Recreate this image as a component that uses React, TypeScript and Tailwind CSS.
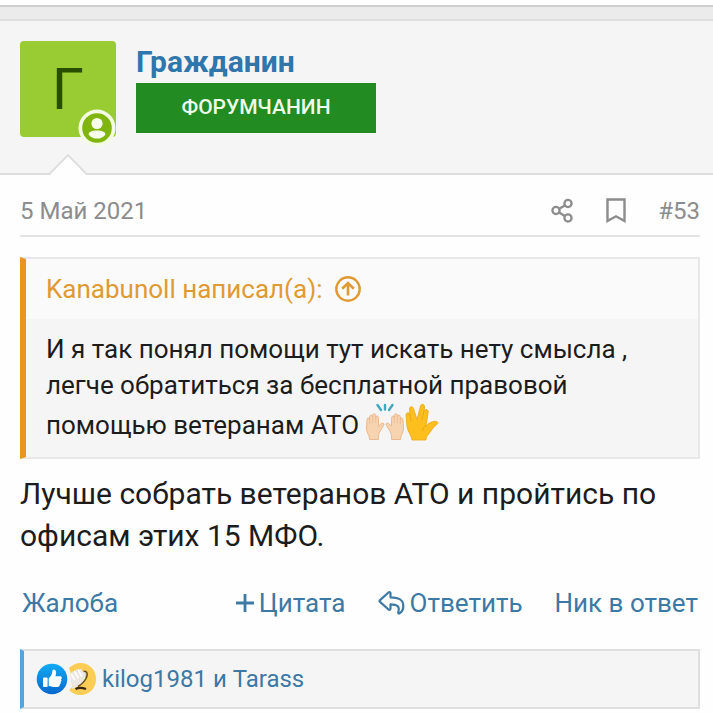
import React from 'react';

type IconProps = { className?: string };

const UserBadge: React.FC<IconProps> = ({ className }) => (
  <svg viewBox="0 0 38 38" className={className} aria-hidden="true">
    <circle cx="19" cy="19" r="18.5" fill="#f3fbe4" />
    <circle cx="19" cy="19" r="14.8" fill="#7fb50c" />
    <circle cx="19" cy="14.5" r="5.6" fill="#f6fdec" />
    <path d="M10.6 25.4c0-3 3.8-4 8.4-4s8.4 1 8.4 4c-1.6 2.6-4.8 4.2-8.4 4.2s-6.8-1.6-8.4-4.2z" fill="#f6fdec" />
  </svg>
);

const ShareIcon: React.FC<IconProps> = ({ className }) => (
  <svg viewBox="0 0 24 26" className={className} fill="none" stroke="currentColor" strokeWidth="2.3" aria-hidden="true">
    <circle cx="6" cy="12.5" r="3.6" />
    <circle cx="18" cy="5.5" r="3.6" />
    <circle cx="18" cy="20" r="3.6" />
    <path d="M9.2 10.7l5.6-3.3M9.2 14.500l5.6 3.500" />
  </svg>
);

const BookmarkIcon: React.FC<IconProps> = ({ className }) => (
  <svg viewBox="0 0 20 26" className={className} fill="none" stroke="currentColor" strokeWidth="2.4" aria-hidden="true">
    <path d="M1.5 1.500h17v21.5L10 18.300 1.5 23z" />
  </svg>
);

const ArrowUpIcon: React.FC<IconProps> = ({ className }) => (
  <svg viewBox="0 0 26 26" className={className} fill="none" stroke="currentColor" strokeWidth="2.4" aria-hidden="true">
    <circle cx="13" cy="13" r="11.7" />
    <path d="M13 19.5V7.5M7.2 12.7L13 7l5.8 5.7" strokeWidth="2.6" />
  </svg>
);

const PlusIcon: React.FC<IconProps> = ({ className }) => (
  <svg viewBox="0 0 20 20" className={className} fill="none" stroke="currentColor" strokeWidth="2.8" aria-hidden="true">
    <path d="M10 1v18M1 10h18" />
  </svg>
);

const ReplyIcon: React.FC<IconProps> = ({ className }) => (
  <svg viewBox="0 0 28 26" className={className} fill="none" stroke="currentColor" strokeWidth="2.2" strokeLinejoin="round" aria-hidden="true">
    <path d="M10.5 2.5c.8-.7 2-.2 2 .9v3.900c7.500.2 12.800 1.800 12.800 8.600 0 3-1.400 5.900-3.700 7.500-.8.500-1.700-.1-1.400-1 2-6.200-1.300-8-7.700-8.100v4.300c0 1.100-1.200 1.600-2 .9L2 11.900c-.6-.5-.6-1.300 0-1.800z" />
  </svg>
);

const RaisedHands: React.FC<IconProps> = ({ className }) => (
  <svg viewBox="0 0 40 40" className={className} aria-hidden="true">
    <g stroke="#3fa9bd" strokeWidth="2.4" strokeLinecap="round">
      <path d="M20 3v4.500M12.500 3l3.500 5M27.500 3L24 8" />
    </g>
    <path
      d="M4.500 37.500c.3-4-2.800-6.500-3-10.500L2 17.500c.2-2 2.600-1.800 2.600 0l.2-3c.2-2 2.800-1.900 2.800 0l.2-1.500c.4-1.900 2.800-1.600 2.800.3v2c.3-1.800 2.700-1.600 2.800.3l.2 8.400 2.700-2.500c1.600-1.300 3.300.1 2.400 1.700L14.500 30c-1 2.300-1 4.500-1 7.500z"
      fill="#f7d3b0"
      stroke="#eab98f"
      strokeWidth="1"
    />
    <path d="M4.700 17v5M7.700 14v7M10.700 15v6" stroke="#e3b48d" strokeWidth=".6" fill="none" />
    <path
      d="M35.500 37.500c-.3-4 2.800-6.500 3-10.500L38 17.500c-.2-2-2.600-1.800-2.600 0l-.2-3c-.2-2-2.800-1.900-2.800 0l-.2-1.500c-.4-1.900-2.800-1.600-2.800.3v2c-.3-1.800-2.700-1.600-2.800.3l-.2 8.400-2.700-2.500c-1.600-1.300-3.300.1-2.400 1.700l4.200 6.800c1 2.300 1 4.500 1 7.500z"
      fill="#f7d3b0"
      stroke="#eab98f"
      strokeWidth="1"
    />
    <path d="M35.300 17v5M32.300 14v7M29.300 15v6" stroke="#e3b48d" strokeWidth=".6" fill="none" />
  </svg>
);

const VulcanHand: React.FC<IconProps> = ({ className }) => (
  <svg viewBox="0 0 34 40" className={className} aria-hidden="true">
    <path
      d="M7 38c0-4-4.500-8-5-14L1 13c-.1-2.600 3.200-3 3.800-.6L4.500 7C4.400 4.200 7.800 3.800 8.500 6.500L12 17.500 15.500 4c.8-2.700 4.300-2 4 .8l-.4 4.200c1-2.400 4.700-1.600 4.100 1L21 24c2.500-2.800 5.700-4.600 9.500-4.700 2.600 0 3 2.200 1.300 3.300-4 2.600-5.300 6.300-8.300 9.600-1.500 1.600-2.500 3-2.500 5.800z"
      fill="#fcbf1e"
      stroke="#efa51b"
      strokeWidth=".8"
      strokeLinejoin="round"
    />
    <path d="M4.800 12.400l1.400 7M19.100 9l-2.300 9M21 24c-2.500.8-3.500 3-3.500 5" stroke="#e9a01a" strokeWidth=".9" fill="none" />
  </svg>
);

const LikeReaction: React.FC<IconProps> = ({ className }) => (
  <svg viewBox="0 0 32 32" className={className} aria-hidden="true">
    <defs>
      <linearGradient id="like" x1="0" y1="0" x2="0" y2="1">
        <stop offset="0" stopColor="#12aaf5" />
        <stop offset="1" stopColor="#0768cc" />
      </linearGradient>
    </defs>
    <circle cx="16" cy="16" r="15.3" fill="url(#like)" />
    <rect x="7" y="14.5" width="4.6" height="9.5" rx="1" fill="#fff" />
    <path d="M12.7 15c2-1.5 3.3-3.2 3.5-5.8.1-2.4 1.2-3 2.4-2.4 2.2 1.100 1.600 4 .9 6.500h4.300c2.300 0 2.500 2.300 1.200 3 .9.900.5 2.300-.5 2.800.6 1 .1 2.200-.8 2.500.2 1.400-.6 2.300-2.200 2.300h-4.200c-1.700 0-3-.4-4.600-1.200z" fill="#fff" />
  </svg>
);

const FacepalmReaction: React.FC<IconProps> = ({ className }) => (
  <svg viewBox="0 0 32 34" className={className} aria-hidden="true">
    <path d="M1 6C4 3 8 1 12.500 1c9 0 15.500 7 15.500 16s-6.500 16-15.500 16c-4.500 0-8.500-1.500-11.500-5l3-3L3 12z" fill="#fbcd54" />
    <path d="M2 13.500l2-4.500 2 1.500L8.500 7l2 1.500L13 6.500l1.500 3 2.500-1v7c0 4-3 7-7.500 9L4 27c1-5-.5-9-2-13.500z" fill="#ebe7e2" />
    <path d="M3.500 12.500l3 5M6.500 9.500l3.500 6M10.500 8l3 6" stroke="#fff" strokeWidth="1.700" strokeLinecap="round" />
    <path d="M15.500 9.500c2.500-.5 3.500.5 3.700 2.500s-.5 3-1.200 4.500c-1.500 3-4 5.500-8 8" stroke="#6d4a1c" strokeWidth="1.500" fill="none" />
    <path d="M7.500 27c3.500-1.800 7-1.300 10.500 0" stroke="#38240f" strokeWidth="2.4" fill="none" />
  </svg>
);

const PostHeader: React.FC = () => (
  <header className="relative flex gap-5 border-b-2 border-[#dedede] bg-[#f5f5f5] px-5 pt-5 pb-9">
    <a href="#user" className="relative flex size-24 shrink-0 items-center justify-center rounded bg-[#99cc33] text-[58px] leading-none text-[#264d00]">
      Г
      <UserBadge className="absolute right-0 -bottom-2.5 size-[38px]" />
    </a>
    <div className="flex flex-col items-start">
      <a href="#user" className="text-3xl leading-[42px] font-bold text-[#2f76ac]">Гражданин</a>
      <span className="flex h-[50px] w-60 items-center justify-center bg-[#228b22] text-[21px] font-medium text-[#eefbe9]">ФОРУМЧАНИН</span>
    </div>
    {/* notch pointing at the avatar */}
    <svg viewBox="0 0 40 22" className="absolute -bottom-[2px] left-12 h-[22px] w-10" aria-hidden="true">
      <path d="M0 21h1.5L20 2l18.5 19H40V22H0z" fill="#fefefe" />
      <path d="M0 21h1.5L20 2l18.5 19H40" fill="none" stroke="#dedede" strokeWidth="1.8" />
    </svg>
  </header>
);

const Quote: React.FC = () => (
  <blockquote className="mt-5 border-2 border-l-6 border-[#e8e8e8] border-l-[#e8961e] bg-[#f5f5f5]">
    <div className="bg-[#fafafa] px-5 py-3">
      <a href="#source" className="flex items-center gap-3 text-[26px] leading-9 text-[#e09a33]">
        Kanabunoll написал(а):
        <ArrowUpIcon className="size-[26px]" />
      </a>
    </div>
    <p className="px-5 pt-3 pb-2.5 text-[26px] leading-9 text-[#1c1c1c]">
      И я так понял помощи тут искать нету смысла , легче обратиться за бесплатной правовой{' '}
      <span className="flex h-11 items-center">
        помощью ветеранам АТО
        <RaisedHands className="mb-1.5 ml-1.5 size-10" />
        <VulcanHand className="mb-1.5 h-10 w-[34px]" />
      </span>
    </p>
  </blockquote>
);

const App: React.FC = () => {
  return (
    <main className="min-h-screen bg-[#fefefe] pt-[5px] font-[Roboto,sans-serif]">
      <div className="h-4 border-y-2 border-t-[#cfcfcf] border-b-[#dedede] bg-[#ebebeb]" />
      <article>
        <PostHeader />
        <div className="pr-[13px] pl-5">
          <div className="flex items-center justify-between border-b-2 border-[#e4e4e4] pt-4 pb-1 text-2xl leading-10 text-[#8c8c8c]">
            <time dateTime="2021-05">5 Май 2021</time>
            <div className="flex items-center">
              <button type="button" aria-label="Поделиться" className="mr-8"><ShareIcon className="h-[26px] w-6" /></button>
              <button type="button" aria-label="Закладка" className="mr-8"><BookmarkIcon className="h-[26px] w-5" /></button>
              <a href="#post-53">#53</a>
            </div>
          </div>

          <Quote />

          <p className="mt-3.5 text-3xl leading-[42px] text-[#1c1c1c]">
            Лучше собрать ветеранов АТО и пройтись по офисам этих 15 МФО.
          </p>

          <div className="mt-7 flex items-center justify-between px-0.5 text-[26px] leading-9 text-[#3c79a5]">
            <button type="button">Жалоба</button>
            <div className="flex items-center gap-8">
              <button type="button" className="flex items-center gap-1">
                <PlusIcon className="size-5" />
                Цитата
              </button>
              <button type="button" className="flex items-center gap-1">
                <ReplyIcon className="h-[26px] w-7" />
                Ответить
              </button>
              <button type="button">Ник в ответ</button>
            </div>
          </div>

          <div className="mt-7 flex items-center border-2 border-l-4 border-[#dfdfdf] border-l-[#55a5dc] bg-[#f5f5f5] px-3 py-2.5 text-2xl leading-9 text-[#3c79a5]">
            <LikeReaction className="size-8" />
            <FacepalmReaction className="mr-0.5 h-[34px] w-8" />
            <a href="#reactions">kilog1981 и Tarass</a>
          </div>
        </div>
      </article>
    </main>
  );
};

export default App;
